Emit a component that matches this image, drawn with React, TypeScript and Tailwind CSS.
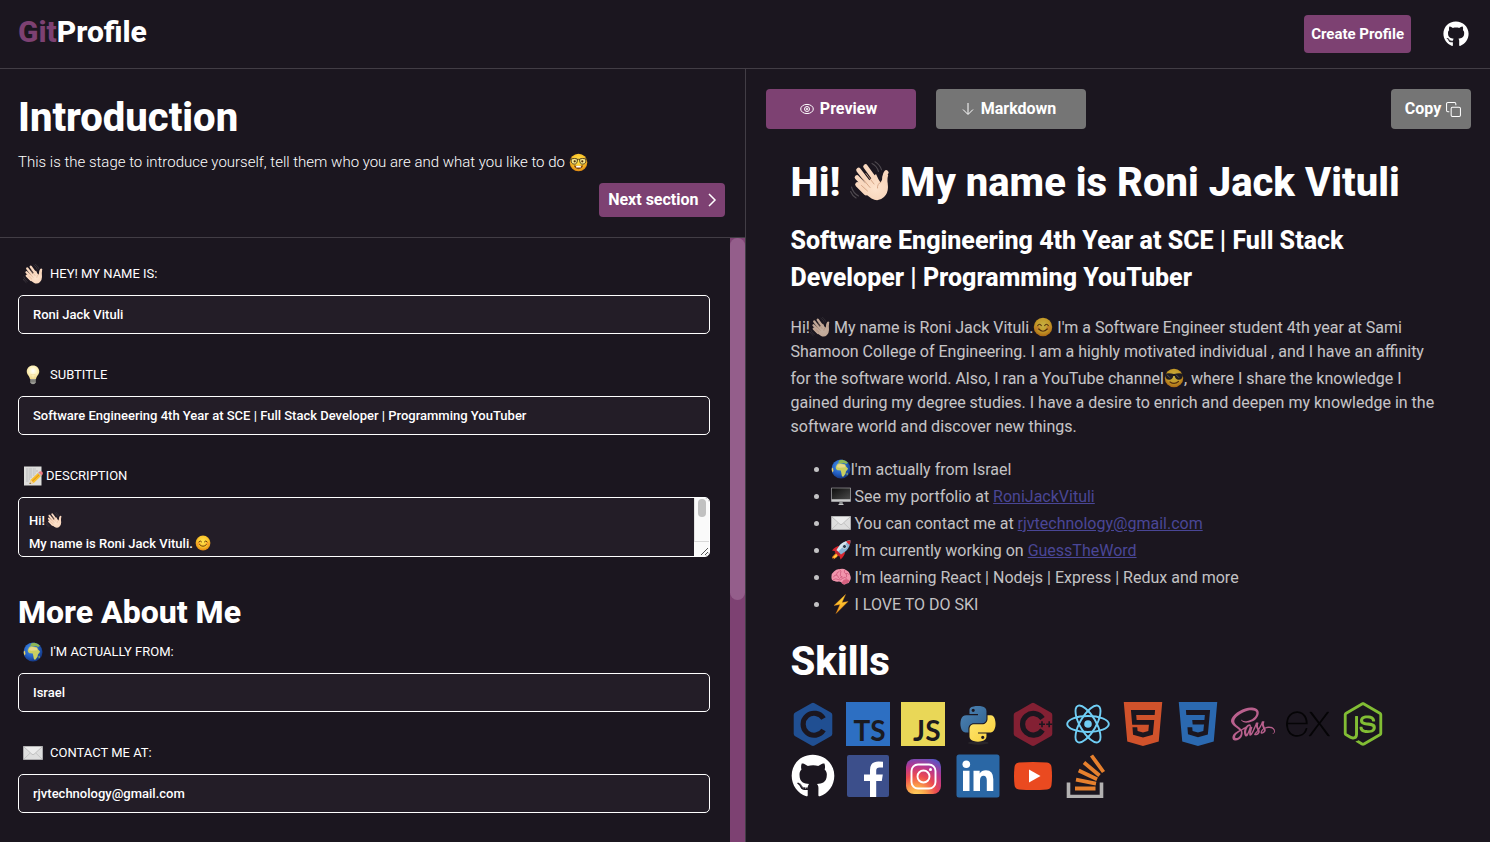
import React from "react";
import { FaGithub, FaNodeJs, FaSass } from "react-icons/fa";
import { SiExpress } from "react-icons/si";

type EmojiProps = { className?: string };

function Gradients() {
  return (
    <svg className="absolute h-0 w-0" aria-hidden="true">
      <defs>
        <radialGradient id="face" cx="50%" cy="40%" r="60%">
          <stop offset="0" stopColor="#ffe44f" />
          <stop offset="0.6" stopColor="#fbc62c" />
          <stop offset="1" stopColor="#dd8410" />
        </radialGradient>
        <radialGradient id="skin" cx="55%" cy="55%" r="60%">
          <stop offset="0" stopColor="#fde3cd" />
          <stop offset="1" stopColor="#f7d3b8" />
        </radialGradient>
        <radialGradient id="bulb" cx="50%" cy="40%" r="60%">
          <stop offset="0" stopColor="#ffffff" />
          <stop offset="0.5" stopColor="#fff5c4" />
          <stop offset="1" stopColor="#f0d98a" />
        </radialGradient>
        <radialGradient id="ocean" cx="40%" cy="35%" r="65%">
          <stop offset="0" stopColor="#4c95e8" />
          <stop offset="0.6" stopColor="#2461c4" />
          <stop offset="1" stopColor="#163a86" />
        </radialGradient>
        <linearGradient id="screen" x1="0" y1="0" x2="1" y2="1">
          <stop offset="0" stopColor="#0d0d0d" />
          <stop offset="1" stopColor="#4a4a4a" />
        </linearGradient>
        <linearGradient id="bolt" x1="0" y1="0" x2="0" y2="1">
          <stop offset="0" stopColor="#ffdf3d" />
          <stop offset="1" stopColor="#f79a1a" />
        </linearGradient>
        <linearGradient id="snakeBlue" x1="0" y1="0" x2="1" y2="1">
          <stop offset="0" stopColor="#4f86b8" />
          <stop offset="1" stopColor="#2f5f8c" />
        </linearGradient>
        <linearGradient id="snakeYellow" x1="0" y1="0" x2="1" y2="1">
          <stop offset="0" stopColor="#ffe873" />
          <stop offset="1" stopColor="#f8cf3a" />
        </linearGradient>
        <radialGradient id="insta" cx="30%" cy="105%" r="115%">
          <stop offset="0" stopColor="#ffd75e" />
          <stop offset="0.25" stopColor="#fba04a" />
          <stop offset="0.5" stopColor="#ec4a50" />
          <stop offset="0.75" stopColor="#b8368f" />
          <stop offset="1" stopColor="#5a54c4" />
        </radialGradient>
      </defs>
    </svg>
  );
}

function Wave({ className }: EmojiProps) {
  return (
    <svg viewBox="0 0 40 40" className={className} aria-hidden="true">
      <g stroke="#4e494f" strokeWidth="1.1" fill="none" strokeLinecap="round">
        <path d="M22 2.5q5 2.5 6.500 8M25 .8q5 3 6.500 8" />
        <path d="M1.500 26q1.500 6 7 9M.6 30.500q1.500 4 5.500 6.500" />
      </g>
      <g stroke="#f9d8bf" strokeWidth="4.600" strokeLinecap="round" fill="none">
        <path d="M15.500 5.500 26 20M8.500 9 20 24M7 16.500 18 28M7.500 23.500 16 32" />
        <path d="M36.300 11.500Q33.500 15 35 23" />
      </g>
      <path
        d="M12 26 26 13Q28 18 30.500 21.500 32.500 19 34 14L38.200 14Q37 18 37.700 23 39 31 34 36 28.500 41.500 21.500 37.500 16 34 10 28Z"
        fill="url(#skin)"
      />
      <path d="M16 12.500 24 23M12.500 17.500 20 26.500M11.500 24.500 17.500 30M31 21q-4 2-3.500 6" stroke="#d3a182" strokeWidth=".9" fill="none" strokeLinecap="round" />
    </svg>
  );
}

function Smile({ className }: EmojiProps) {
  return (
    <svg viewBox="0 0 40 40" className={className} aria-hidden="true">
      <circle cx="20" cy="20" r="18.500" fill="url(#face)" />
      <circle cx="9" cy="22" r="4.500" fill="#f58a2c" opacity=".55" />
      <circle cx="31" cy="22" r="4.500" fill="#f58a2c" opacity=".55" />
      <path d="M9.500 17q3.500-5 7 0M23.500 17q3.500-5 7 0M11.500 24q8.500 9 17 0" stroke="#67380a" strokeWidth="2.400" fill="none" strokeLinecap="round" />
    </svg>
  );
}

function Nerd({ className }: EmojiProps) {
  return (
    <svg viewBox="0 0 40 40" className={className} aria-hidden="true">
      <circle cx="20" cy="20" r="18.500" fill="url(#face)" />
      <path d="M10 26q10 3 20 0-2 8-10 8t-10-8z" fill="#8a4a10" />
      <path d="M15 27h10v3.500H15z" fill="#fff" />
      <g fill="#f8e88a" stroke="#4a3a1c" strokeWidth="2">
        <path d="M4.500 12.500q7-2 13 0 1 11-6.500 11t-6.500-11zM35.500 12.500q-7-2-13 0-1 11 6.500 11t6.500-11z" />
      </g>
      <path d="M17.500 14q2.500-1.500 5 0M1.500 13h3.500M35 13h3.500" stroke="#4a3a1c" strokeWidth="2" fill="none" />
      <circle cx="12" cy="17.500" r="2.400" fill="#4c2c0c" />
      <circle cx="28" cy="17.500" r="2.400" fill="#4c2c0c" />
    </svg>
  );
}

function Cool({ className }: EmojiProps) {
  return (
    <svg viewBox="0 0 40 40" className={className} aria-hidden="true">
      <circle cx="20" cy="20" r="18.500" fill="url(#face)" />
      <path d="M1.500 11.500Q10 9 20 12q10-3 18.500-.5l-.7 3.500q-1.300 8.500-8.300 8.500-6.500 0-8-7.500h-3q-1.500 7.500-8 7.500-7 0-8.300-8.500z" fill="#1f1d1f" />
      <path d="M6 13.500l6 6M24 13.500l6 6" stroke="#636870" strokeWidth="2" />
      <path d="M12 28q9 6 17-1" stroke="#67380a" strokeWidth="2.400" fill="none" strokeLinecap="round" />
    </svg>
  );
}

function Bulb({ className }: EmojiProps) {
  return (
    <svg viewBox="0 0 40 40" className={className} aria-hidden="true">
      <path d="M20 1C12.500 1 7.500 6.500 7.500 13c0 6.500 5.500 8.500 6.500 15h12c1-6.500 6.500-8.500 6.500-15C32.500 6.500 27.500 1 20 1z" fill="url(#bulb)" />
      <path d="M17 27l-1.500-9 3 2 1.500-2 1.500 2 3-2L23 27" stroke="#ecd08a" strokeWidth=".8" fill="none" />
      <path d="M14.500 28h11v6.500q-1 4-5.500 4t-5.500-4z" fill="#9d9d97" />
      <path d="M14.500 30.500h11M14.500 33.500h11" stroke="#5f5f5b" strokeWidth="1.200" />
    </svg>
  );
}

function Memo({ className }: EmojiProps) {
  return (
    <svg viewBox="0 0 40 40" className={className} aria-hidden="true">
      <path d="M2 1h35v38H2z" fill="#dededc" />
      <path d="M6 6h20M6 10h24M6 14h20M6 18h17M6 22h12M6 26h8M6 30h6" stroke="#a9aaad" strokeWidth="1.300" strokeDasharray="4 1 7 1.500" />
      <path d="M13 36l2.500-8.500L31 13l6 6-15.500 15z" fill="#f8bf2b" />
      <path d="M17.500 31.500 33.500 16" stroke="#d98b16" strokeWidth="2" />
      <path d="M31 13l2-2q3-1.500 5.500.5 2 3 .5 5.500l-2 2z" fill="#ee7d86" />
      <path d="M29.500 14.500l1.500-1.500 6 6-1.500 1.500z" fill="#b8c0c6" />
      <path d="M13 36l2.500-8.500 6 6.500z" fill="#f3d4a0" />
      <path d="M13 36l1-3 2 2z" fill="#2c2c2c" />
    </svg>
  );
}

function Globe({ className }: EmojiProps) {
  return (
    <svg viewBox="0 0 40 40" className={className} aria-hidden="true">
      <circle cx="20" cy="20" r="19" fill="url(#ocean)" />
      <path d="M12 11q2-3 6-2.500l6 1.500 4 .5 2.500 5 3.500 3.500q-1 3.500-4 5.500l-1 5-4 5.500q-3 1-3.500-2l-1-5.500-1-4.500q-3-1-6.500-.5-4-2-3.500-6.500z" fill="#c9cf60" />
      <path d="M13 12q5-3 11-1l4 1.500 1 4-12 1-5-1z" fill="#e8d88c" />
      <path d="M14 7l3-4.500 6-1 7 2.500 4 4-4 2-4-2-5 1-3-1z" fill="#8db755" />
      <path d="M2 17l2 2 1 5-2 3Q.5 22 2 17z" fill="#f0d75f" />
      <path d="M31 29l2-2 .5 4-2 2z" fill="#a9bf57" />
    </svg>
  );
}

function Envelope({ className }: EmojiProps) {
  return (
    <svg viewBox="0 0 40 40" className={className} aria-hidden="true">
      <path d="M.5 6.500h39v27H.5z" fill="#dedede" />
      <path d="M1 33 15 19.500M39 33 25 19.500" stroke="#b3b3b3" strokeWidth="1.200" />
      <path d="M1 7h38L22 22.500q-2 1.500-4 0z" fill="#ececec" stroke="#a6a6a6" strokeWidth="1.200" />
    </svg>
  );
}

function Desktop({ className }: EmojiProps) {
  return (
    <svg viewBox="0 0 40 40" className={className} aria-hidden="true">
      <path d="M.5 3.500h39v28H.5z" fill="#c9cacb" />
      <path d="M1.500 4.500h37v22h-37z" fill="url(#screen)" />
      <path d="M17 31.500h6l1 5h-8z" fill="#8e9092" />
      <path d="M15 36h10v2H15z" fill="#c6c8ca" />
    </svg>
  );
}

function Rocket({ className }: EmojiProps) {
  return (
    <svg viewBox="0 0 40 40" className={className} aria-hidden="true">
      <path d="M11 25 3 33l-1 4 4-1-1 3 7-5 3-5z" fill="#fb8b1f" />
      <path d="M12 28l-6 5-1 3 6-3z" fill="#ffe14b" />
      <path d="M17 12Q9 12 2 21l9 2zM28 23q0 8-9 16l-3-10z" fill="#d8262f" />
      <path d="M39 1Q27 1 18 10L9 23l8 8 13-9Q39 13 39 1z" fill="#8ab4d4" />
      <path d="M39 1Q27 1 18 10L9 23l3 3L31 6z" fill="#d5e5ef" />
      <path d="M39 1q-5 0-9 2l7 7q2-4 2-9z" fill="#d8262f" />
      <circle cx="27" cy="13" r="4" fill="#27394d" stroke="#eef5f9" strokeWidth="1.500" />
      <path d="M11 20l9 9-4 4-9-9z" fill="#c42530" />
    </svg>
  );
}

function Brain({ className }: EmojiProps) {
  return (
    <svg viewBox="0 0 40 40" className={className} aria-hidden="true">
      <path d="M1 22Q0 13 6 9q5-6 12-5 7-2 12 2 7 3 8 10 3 6 0 11-1 5-7 6-5 4-9-1-2-3-6-3-6 1-9-1Q1 27 1 22z" fill="#f194ac" />
      <path d="M25 26q6-3 12 1-1 5-7 6-5 4-9-1z" fill="#d6607f" />
      <path d="M5 20q2-5 6-4 0-6 5-7M11 16q4 1 4 5M17 5q5 3 2 8t3 7M27 7q-2 4 2 6t2 7M30 13q4-2 6 2M5 25q5-3 9 0t9-2 8 0M22 20q-4 0-5 3" stroke="#c95276" strokeWidth="1.500" fill="none" strokeLinecap="round" />
    </svg>
  );
}

function Bolt({ className }: EmojiProps) {
  return (
    <svg viewBox="0 0 40 40" className={className} aria-hidden="true">
      <path d="M29 1 6 23l12-2-8 18 24-24-12 2z" fill="url(#bolt)" stroke="#e5851a" strokeWidth=".8" />
    </svg>
  );
}

const inlineEmoji = "mt-1 inline-block size-5 align-[-4px]";
const listEmoji = "inline-block size-5 align-[-4px]";

function FieldLabel({ htmlFor, icon, children }: { htmlFor: string; icon: React.ReactNode; children: React.ReactNode }) {
  return (
    <label htmlFor={htmlFor} className="flex h-5 items-center gap-[7px] pl-[5px] text-[13px] uppercase">
      {icon}
      {children}
    </label>
  );
}

function Field({ id, icon, label, value }: { id: string; icon: React.ReactNode; label: string; value: string }) {
  return (
    <div className="flex flex-col gap-[11px]">
      <FieldLabel htmlFor={id} icon={icon}>{label}</FieldLabel>
      <input
        id={id}
        type="text"
        defaultValue={value}
        className="h-[39px] w-full rounded-[5px] border border-white bg-[#231d27] px-3.5 text-[13px] font-medium text-white outline-none"
      />
    </div>
  );
}

function CLogo() {
  return (
    <svg viewBox="0 0 44 44" className="size-11" aria-label="C">
      <path d="M20.500 1.200q1.500-.8 3 0l16.300 9.400q1.500.8 1.500 2.500v18.600q0 1.600-1.500 2.500l-16.300 9.300q-1.500.8-3 0L4.200 34.200q-1.500-.9-1.500-2.500V13.100q0-1.700 1.500-2.500z" fill="#204f92" />
      <path d="M32.500 16.500A11 11 0 1 0 32.500 28" fill="none" stroke="#1b161f" strokeWidth="5.200" />
    </svg>
  );
}

function CppLogo() {
  return (
    <svg viewBox="0 0 44 44" className="size-11" aria-label="C++">
      <path d="M20.500 1.200q1.500-.8 3 0l16.300 9.400q1.500.8 1.500 2.500v18.600q0 1.600-1.500 2.500l-16.300 9.300q-1.500.8-3 0L4.200 34.200q-1.500-.9-1.500-2.500V13.100q0-1.700 1.500-2.500z" fill="#832033" />
      <path d="M31.500 16.500A10.800 10.800 0 1 0 31.500 28" fill="none" stroke="#1b161f" strokeWidth="5.200" />
      <path d="M28 22.200h6M31 19.200v6M35.200 22.200h6M38.200 19.200v6" stroke="#1b161f" strokeWidth="1.600" />
    </svg>
  );
}

function ReactLogo() {
  return (
    <svg viewBox="0 0 44 44" className="size-11" fill="none" stroke="#70cef5" strokeWidth="1.900" aria-label="React">
      <circle cx="22" cy="22" r="3.800" fill="#70cef5" stroke="none" />
      <ellipse cx="22" cy="22" rx="20.800" ry="8" />
      <ellipse cx="22" cy="22" rx="20.800" ry="8" transform="rotate(60 22 22)" />
      <ellipse cx="22" cy="22" rx="20.800" ry="8" transform="rotate(120 22 22)" />
    </svg>
  );
}

function HtmlLogo() {
  return (
    <svg viewBox="0 0 24 24" className="size-11" fill="#d0522b" aria-label="HTML5">
      <path d="M1.500 0h21l-1.910 21.563L11.977 24l-8.564-2.438L1.500 0zm7.031 9.750l-.232-2.718 10.059.003.23-2.622L5.412 4.410l.698 8.010h9.126l-.326 3.426-2.910.804-2.955-.81-.188-2.110H6.248l.33 4.171L12 19.351l5.379-1.443.744-8.157H8.531z" />
    </svg>
  );
}

function CssLogo() {
  return (
    <svg viewBox="0 0 24 24" className="size-11" fill="#2b69b0" aria-label="CSS3">
      <path d="M1.500 0h21l-1.910 21.563L11.977 24l-8.565-2.438L1.500 0zm17.090 4.413L5.410 4.410l.213 2.622 10.125.002-.255 2.716h-6.640l.24 2.573h6.182l-.366 3.523-2.910.804-2.956-.81-.188-2.110h-2.610l.29 3.855L12 19.288l5.373-1.530L18.590 4.414z" />
    </svg>
  );
}

function PythonLogo() {
  return (
    <svg viewBox="0 0 128 128" className="size-11" aria-label="Python">
      <g transform="translate(0 10)">
        <ellipse cx="65" cy="109" rx="30" ry="5" fill="#2a262b" />
        <path fill="url(#snakeBlue)" d="M63.391 1.988c-4.222.02-8.252.379-11.8 1.007-10.45 1.846-12.346 5.710-12.346 12.837v9.411h24.693v3.137H29.977c-7.176 0-13.460 4.313-15.426 12.521-2.268 9.405-2.368 15.275 0 25.096 1.755 7.311 5.947 12.519 13.124 12.519h8.491V67.234c0-8.151 7.051-15.340 15.426-15.340h24.665c6.866 0 12.346-5.654 12.346-12.548V15.833c0-6.693-5.646-11.720-12.346-12.837-4.244-.706-8.645-1.027-12.866-1.008zM50.037 9.557c2.550 0 4.634 2.117 4.634 4.721 0 2.593-2.083 4.690-4.634 4.690-2.560 0-4.633-2.097-4.633-4.690-.001-2.604 2.073-4.721 4.633-4.721z" />
        <path fill="url(#snakeYellow)" d="M91.682 28.380v10.966c0 8.500-7.208 15.655-15.426 15.655H51.591c-6.756 0-12.346 5.783-12.346 12.549v23.515c0 6.691 5.818 10.628 12.346 12.547 7.816 2.297 15.312 2.713 24.665 0 6.216-1.801 12.346-5.423 12.346-12.547v-9.412H63.938v-3.138h37.012c7.176 0 9.852-5.005 12.348-12.519 2.578-7.735 2.467-15.174 0-25.096-1.774-7.145-5.161-12.521-12.348-12.521h-9.268zM77.809 87.927c2.561 0 4.634 2.097 4.634 4.692 0 2.602-2.074 4.719-4.634 4.719-2.550 0-4.633-2.117-4.633-4.719 0-2.595 2.083-4.692 4.633-4.692z" />
      </g>
    </svg>
  );
}

function FacebookLogo() {
  return (
    <svg viewBox="0 0 44 44" className="size-11" aria-label="Facebook">
      <rect x="1" y="1" width="42" height="42" rx="2" fill="#3c4f8b" />
      <path d="M24 43V27h-6v-6.500h6V16q0-8.500 8.500-8.500l4.500.3v5.800h-3.500q-3.300 0-3.300 3.200v3.700h6.600l-1 6.500h-5.600v16z" fill="#fff" />
    </svg>
  );
}

function InstagramLogo() {
  return (
    <svg viewBox="0 0 44 44" className="size-11" aria-label="Instagram">
      <rect x="5" y="5" width="35" height="35" rx="8" fill="url(#insta)" />
      <g fill="none" stroke="#fff" strokeWidth="1.900">
        <rect x="10.500" y="10.500" width="24" height="24" rx="6.500" />
        <circle cx="22.500" cy="22.500" r="6" />
      </g>
      <circle cx="29.500" cy="15.500" r="1.500" fill="#fff" />
    </svg>
  );
}

function LinkedinLogo() {
  return (
    <svg viewBox="0 0 44 44" className="size-11" fill="#fff" aria-label="LinkedIn">
      <rect x=".5" y=".5" width="43" height="43" rx="2.500" fill="#2a67a5" />
      <circle cx="10.300" cy="10.300" r="3.800" />
      <path d="M7 16.800h6.500v20.300H7zM17.500 16.800h6.200v2.800q2-3.300 6.200-3.300 7.400 0 7.400 9v11.800h-6.500V26.600q0-4.800-3.300-4.800-3.500 0-3.500 4.800v10.500h-6.500z" />
    </svg>
  );
}

function YoutubeLogo() {
  return (
    <svg viewBox="0 0 44 44" className="size-11" aria-label="YouTube">
      <path d="M8 8.500q14-1.200 28 0 4 .5 4.500 4.500 1 9 0 18-.5 4-4.500 4.500-14 1.200-28 0-4-.5-4.500-4.500-1-9 0-18 .5-4 4.500-4.500z" fill="#ea4a20" />
      <path d="M18 15.500v13L29.500 22z" fill="#fff" />
    </svg>
  );
}

function StackOverflowLogo() {
  return (
    <svg viewBox="0 0 44 44" className="size-11" fill="none" aria-label="Stack Overflow">
      <path d="M2.500 28.500v14h33v-14" stroke="#b3b1b1" strokeWidth="3.600" />
      <path d="M9 34.500h20.500M10 25.600l20 4M12.700 16.500l18.400 8.700M18 8.500l15.500 13M25.500 1.500l12 16.500" stroke="#e6802d" strokeWidth="3.800" />
    </svg>
  );
}

const tile = "flex size-11 items-end justify-end pr-1 font-['Lato',sans-serif] text-[28px] leading-8 font-bold text-[#1b1a20]";

const skills: { name: string; icon: React.ReactNode }[] = [
  { name: "C", icon: <CLogo /> },
  { name: "TypeScript", icon: <span className={`${tile} bg-[#2d6fc2]`}>TS</span> },
  { name: "JavaScript", icon: <span className={`${tile} bg-[#e9d757]`}>JS</span> },
  { name: "Python", icon: <PythonLogo /> },
  { name: "C++", icon: <CppLogo /> },
  { name: "React", icon: <ReactLogo /> },
  { name: "HTML5", icon: <HtmlLogo /> },
  { name: "CSS3", icon: <CssLogo /> },
  { name: "Sass", icon: <FaSass className="size-11 text-[#b9608d]" /> },
  { name: "Express", icon: <SiExpress className="size-11 text-[#050406]" /> },
  { name: "Node.js", icon: <FaNodeJs className="size-11 text-[#82bd34]" /> },
  { name: "GitHub", icon: <FaGithub className="size-11 text-white" /> },
  { name: "Facebook", icon: <FacebookLogo /> },
  { name: "Instagram", icon: <InstagramLogo /> },
  { name: "LinkedIn", icon: <LinkedinLogo /> },
  { name: "YouTube", icon: <YoutubeLogo /> },
  { name: "Stack Overflow", icon: <StackOverflowLogo /> },
];

function Editor() {
  return (
    <section className="flex min-h-0 flex-1 flex-col border-r border-[#423d45]">
      <div className="flex flex-col border-b border-[#423d45] px-[18px] pt-[25px] pb-5">
        <h1 className="text-[40px] leading-12 font-extrabold">Introduction</h1>
        <p className="mt-2 flex items-center gap-1 text-[15px] leading-6 font-light">
          This is the stage to introduce yourself, tell them who you are and what you like to do
          <Nerd className="size-[19px]" />
        </p>
        <button className="mt-[9px] mr-0.5 flex h-[34px] items-center gap-2 self-end rounded bg-[#7d4172] pr-2 pl-[9px] text-base font-bold">
          Next section
          <svg viewBox="0 0 10 14" className="h-3.5 w-2.5" fill="none" stroke="white" strokeWidth="1.500" aria-hidden="true">
            <path d="M2 1l6 6-6 6" />
          </svg>
        </button>
      </div>
      <div className="flex min-h-0 flex-1">
        <form className="flex min-w-0 flex-1 flex-col overflow-hidden pt-[26px] pr-5 pl-[18px]">
          <div className="flex flex-col gap-[31px]">
            <Field id="name" icon={<Wave className="size-5" />} label="Hey! My name is:" value="Roni Jack Vituli" />
            <Field id="subtitle" icon={<Bulb className="size-5" />} label="Subtitle" value="Software Engineering 4th Year at SCE | Full Stack Developer | Programming YouTuber" />
            <div className="flex flex-col gap-[11px]">
              <label htmlFor="description" className="flex h-5 items-center gap-[3px] pl-[5px] text-[13px] uppercase">
                <Memo className="size-5" />
                Description
              </label>
              <div className="relative flex h-[60px] overflow-hidden rounded-[5px] border border-white bg-[#231d27]">
                <textarea
                  id="description"
                  defaultValue={"Hi!\nMy name is Roni Jack Vituli."}
                  className="min-w-0 flex-1 resize-none overflow-hidden px-2.5 pt-[11px] text-[13px] leading-[23px] font-medium text-white outline-none"
                />
                <Wave className="absolute top-3.5 left-[27px] size-4" />
                <Smile className="absolute top-[37px] left-44 size-4" />
                <div className="flex w-[15px] flex-col bg-[#fafafa]" aria-hidden="true">
                  <div className="flex flex-1 justify-center border-l border-[#e2e2e2] pt-px">
                    <div className="h-[18px] w-2 rounded-full bg-[#c1c1c1]" />
                  </div>
                  <div className="flex h-[15px] items-end justify-end border-t border-[#d8d8d8]">
                    <svg viewBox="0 0 9 9" className="size-[9px]" stroke="#555" strokeWidth="1">
                      <path d="M1 8l7-7M5 8l3-3" />
                    </svg>
                  </div>
                </div>
              </div>
            </div>
          </div>
          <h2 className="mt-[35px] mb-2.5 text-[32px] leading-10 font-extrabold">More About Me</h2>
          <div className="flex flex-col gap-[31px]">
            <Field id="from" icon={<Globe className="size-5" />} label="I'm actually from:" value="Israel" />
            <Field id="contact" icon={<Envelope className="size-5" />} label="Contact me at:" value="rjvtechnology@gmail.com" />
          </div>
        </form>
        <div className="w-[15px] bg-[#7d4172]" aria-hidden="true">
          <div className="h-3/5 rounded-full bg-[#945e8b]" />
        </div>
      </div>
    </section>
  );
}

function Preview() {
  const link = "text-[#4a4696] underline";
  return (
    <section className="flex min-h-0 flex-1 flex-col overflow-hidden pt-5">
      <div className="flex gap-5 pr-[19px] pl-5 font-bold">
        <button className="flex h-10 w-[150px] items-center justify-center gap-1.5 rounded bg-[#7d4172] pr-1">
          <svg viewBox="0 0 14 14" className="size-3.5" fill="none" stroke="white" strokeWidth="1" aria-hidden="true">
            <ellipse cx="7" cy="7" rx="6.300" ry="4.600" />
            <circle cx="7" cy="7" r="2.500" />
            <circle cx="7" cy="7" r=".8" />
          </svg>
          Preview
        </button>
        <button className="flex h-10 w-[150px] items-center justify-center gap-1.5 rounded bg-[#757575] pr-1">
          <svg viewBox="0 0 14 14" className="size-3.5" fill="none" stroke="white" strokeWidth="1" aria-hidden="true">
            <path d="M7 1v11M2 7.500l5 5 5-5" />
          </svg>
          Markdown
        </button>
        <button className="ml-auto flex h-10 w-20 items-center justify-center gap-[5px] rounded bg-[#757575] pl-1">
          Copy
          <svg viewBox="0 0 16 16" className="size-[15px]" fill="none" stroke="white" strokeWidth="1.100" aria-hidden="true">
            <path d="M3.500 10.500H2A1.400 1.400 0 0 1 .6 9.100V2A1.400 1.400 0 0 1 2 .6h7.100A1.400 1.400 0 0 1 10.500 2v1.500" />
            <rect x="5.500" y="5.500" width="9.900" height="9.900" rx="1.400" />
          </svg>
        </button>
      </div>
      <article className="flex flex-col pr-[50px] pl-[45px]">
        <h1 className="mt-[30px] text-[40px] leading-12 font-extrabold">
          Hi! <Wave className="inline-block size-10 align-[-5px]" /> My name is Roni Jack Vituli
        </h1>
        <h2 className="mt-[15px] text-[25px] leading-[37px] font-extrabold">
          Software Engineering 4th Year at SCE | Full Stack Developer | Programming YouTuber
        </h2>
        <p className="mt-[17px] text-base leading-6 text-white opacity-75">
          Hi!<Wave className={inlineEmoji} /> My name is Roni Jack Vituli.<Smile className={inlineEmoji} /> I'm a Software
          Engineer student 4th year at Sami Shamoon College of Engineering. I am a highly motivated individual , and I have
          an affinity for the software world. Also, I ran a YouTube channel<Cool className={inlineEmoji} />, where I share
          the knowledge I gained during my degree studies. I have a desire to enrich and deepen my knowledge in the software
          world and discover new things.
        </p>
        <ul className="mt-[17px] list-disc pl-10 leading-[27px] text-[#c3c2c4]">
          <li><Globe className={listEmoji} />I'm actually from Israel</li>
          <li><Desktop className={listEmoji} /> See my portfolio at <a href="#portfolio" className={link}>RoniJackVituli</a></li>
          <li><Envelope className={listEmoji} /> You can contact me at <a href="mailto:rjvtechnology@gmail.com" className={link}>rjvtechnology@gmail.com</a></li>
          <li><Rocket className={listEmoji} /> I'm currently working on <a href="#guesstheword" className={link}>GuessTheWord</a></li>
          <li><Brain className={listEmoji} /> I'm learning React | Nodejs | Express | Redux and more</li>
          <li><Bolt className={listEmoji} /> I LOVE TO DO SKI</li>
        </ul>
        <h1 className="mt-5 text-[40px] leading-12 font-extrabold">Skills</h1>
        <ul className="mt-4 flex flex-wrap gap-x-[11px] gap-y-2 pr-3">
          {skills.map((skill) => (
            <li key={skill.name} title={skill.name}>{skill.icon}</li>
          ))}
        </ul>
      </article>
    </section>
  );
}

export default function App() {
  return (
    <div className="flex h-screen flex-col overflow-hidden bg-[#1b161f] font-['Roboto',sans-serif] text-white">
      <Gradients />
      <header className="flex h-[69px] shrink-0 items-center justify-between border-b border-[#423d45] pr-[21px] pl-[18px]">
        <a href="#home" className="pb-1 text-[30px] leading-9 font-extrabold">
          <span className="text-[#7d4172]">Git</span>Profile
        </a>
        <div className="flex items-center gap-8">
          <button className="h-[38px] rounded bg-[#7d4172] px-[7px] text-[15px] font-bold">Create Profile</button>
          <a href="#github" aria-label="GitHub">
            <FaGithub className="size-[26px]" />
          </a>
        </div>
      </header>
      <main className="flex min-h-0 flex-1 [&>section]:basis-0">
        <Editor />
        <Preview />
      </main>
    </div>
  );
}
